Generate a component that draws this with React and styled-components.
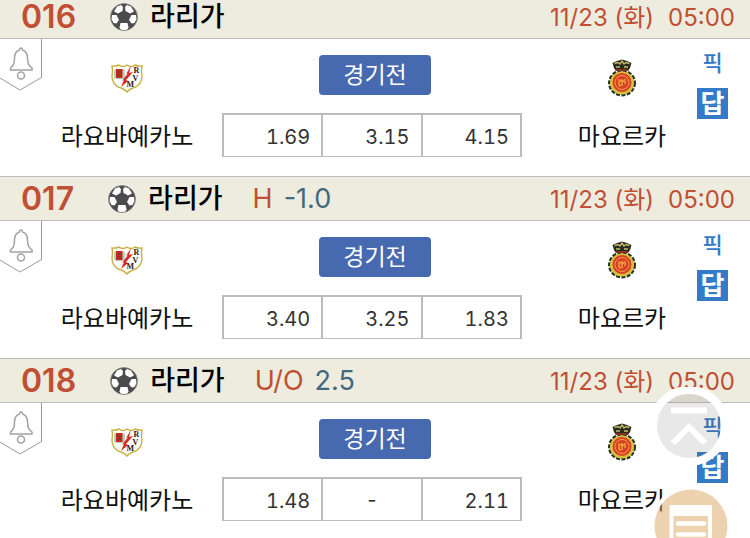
// src/App.jsx

import React from 'react';
import styled, { createGlobalStyle } from 'styled-components';

const GlobalStyle = createGlobalStyle`
  * {
    box-sizing: border-box;
  }

  html {
    overflow: hidden;
  }

  body {
    margin: 0;
    background: #fff;
    color: #1c1c1c;
    font-family: Inter, 'Noto Sans CJK KR', sans-serif;
  }

  button {
    border: none;
    padding: 0;
    font-family: inherit;
    cursor: pointer;
  }
`;

const GameList = styled.main`
  margin-top: -6px;
`;

const Game = styled.article`
  height: 182px;
`;

const GameHeader = styled.header`
  display: flex;
  align-items: center;
  height: 45px;
  padding: 0 15px 0 21px;
  border-top: 1px solid #bcbcbc;
  border-bottom: 1px solid #bcbcbc;
  background: #eeecdf;
  white-space: nowrap;
`;

const GameNumber = styled.span`
  margin-right: 34px;
  color: #c04f33;
  font-size: 32px;
  font-weight: 600;
  line-height: 28px;
`;

const League = styled.h2`
  margin: 0 30px 0 12px;
  padding-bottom: 4px;
  color: #000;
  font-size: 27px;
  font-weight: 500;
`;

const BetType = styled.span`
  margin-right: 11px;
  color: #c04f33;
  font-size: 27px;
`;

const BetLine = styled.span`
  color: #416a80;
  font-size: 27px;
`;

const Kickoff = styled.time`
  display: flex;
  align-items: baseline;
  gap: 14px;
  margin-left: auto;
  padding-bottom: 2px;
  color: #c04f33;
  font-size: 24px;
`;

const GameBody = styled.div`
  position: relative;
  display: grid;
  grid-template-columns: 222fr 306fr 162fr 60fr;
  height: 137px;
`;

const AlarmButton = styled.button`
  position: absolute;
  top: 0;
  left: 0;
  width: 42px;
  height: 53px;
  background: none;

  svg {
    display: block;
  }
`;

const Team = styled.section`
  display: flex;
  flex-direction: column;
  align-items: center;
  padding-top: 18px;
  padding-left: ${(props) => (props.$home ? '32px' : '26px')};
`;

const TeamName = styled.h3`
  margin: 20px 0 0;
  font-size: 24px;
  font-weight: 400;
  line-height: 40px;
  color: #111;
  white-space: nowrap;
`;

const Center = styled.section`
  display: flex;
  flex-direction: column;
  align-items: center;
  padding-top: 16px;
`;

const StatusButton = styled.button`
  width: 112px;
  height: 40px;
  border-radius: 4px;
  background: #4769b0;
  color: #fff;
  font-size: 23px;
  line-height: 40px;
`;

const Odds = styled.table`
  align-self: flex-start;
  width: 98%;
  height: 44px;
  margin-top: 18px;
  border-collapse: collapse;
  table-layout: fixed;
`;

const OddsCell = styled.td`
  padding: ${(props) => (props.$empty ? '0' : '2px 11px 0 0')};
  border: 2px solid #bcbcbc;
  border-bottom-width: 1px;
  color: #333;
  font-size: 20px;
  font-variant-numeric: tabular-nums;
  text-align: ${(props) => (props.$empty ? 'center' : 'right')};
`;

const Links = styled.nav`
  display: flex;
  flex-direction: column;
  align-items: center;
  gap: 9px;
  padding: 9px 15px 0 0;
`;

const PickLink = styled.a`
  color: #347ac6;
  font-size: 22px;
  font-weight: 500;
  line-height: 31px;
  text-decoration: none;
`;

const AnswerLink = styled.a`
  width: 31px;
  background: #347ac6;
  color: #fff;
  font-size: 26px;
  font-weight: 700;
  line-height: 31px;
  text-align: center;
  text-decoration: none;
`;

const FloatingButtons = styled.aside`
  position: fixed;
  right: 18px;
  bottom: -29px;
  display: flex;
  flex-direction: column;
  align-items: flex-start;
  gap: 20px;
`;

const RoundButton = styled.button`
  border-radius: 50%;
  background: none;

  svg {
    display: block;
  }
`;

const Ball = () => (
  <svg width="28" height="28" viewBox="0 0 28 28" aria-hidden="true">
    <circle cx="14" cy="14" r="13.5" fill="#4b4b4d" />
    <g fill="#fff">
      <path d="M7 3.500 11 2 13 4 12.500 8 8 10.500 4 8.500Z" />
      <path d="M21 3.500 17 2 15 4 15.500 8 20 10.500 24 8.500Z" />
      <path d="M2 12 6.500 12 9 17 6.500 20.500 3.500 20 1.500 16Z" />
      <path d="M26 12 21.500 12 19 17 21.500 20.500 24.500 20 26.500 16Z" />
      <path d="M10.500 20H17.500L18.500 24.500 17 27H11L9.500 24.500Z" />
    </g>
    <circle cx="14" cy="14" r="13.500" fill="none" stroke="#8a8a88" strokeWidth="0.8" />
  </svg>
);

const Bell = () => (
  <svg width="42" height="53" viewBox="0 0 42 53" fill="none" aria-hidden="true">
    <path d="M0 39 20 51 41.500 38.500V0" stroke="#999" />
    <g stroke="#a3a3a3" strokeWidth="1.500">
      <path d="M21 9C20 9 19.500 10 19.500 11 16 12 14.500 15 14.500 19 14.500 25 13.500 26.500 10.500 29V31H32V29C29 26.500 27.500 25 27.500 19 27.500 15 26 12 22.500 11 22.500 10 22 9 21 9Z" />
      <circle cx="21" cy="36.500" r="3.500" />
    </g>
  </svg>
);

const RayoCrest = () => (
  <svg width="40" height="40" viewBox="0 0 40 40" aria-hidden="true">
    <path d="M5 9Q9 9.500 12 8 16 11 20 8 24 11 28 8 31 9.500 35 9 34 13 35 19 35 26 29 30 23 31.500 20 35 17 31.500 11 30 5 26 5 19 6 13 5 9Z" fill="#fffefa" stroke="#c9b043" strokeWidth="1.400" />
    <rect x="7" y="12" width="11" height="10" rx="2" fill="#b4d3c0" />
    <rect x="9" y="12" width="6.500" height="9" fill="#c92a20" />
    <path d="M10 15H14.500M10 18H14.500" stroke="#6b3c22" />
    <path d="M24 9 22 16 26 15 19 23 21 24 14 30 17 23 15 24 21 16 19 17Z" fill="#d82a25" />
    <g fill="#222" fontFamily="Liberation Serif, serif" fontSize="8" fontWeight="700">
      <text x="26.500" y="16">R</text>
      <text x="25.500" y="23.500">V</text>
      <text x="19.500" y="30">M</text>
    </g>
  </svg>
);

const MallorcaCrest = () => (
  <svg width="40" height="40" viewBox="0 0 40 40" aria-hidden="true">
    <ellipse cx="20" cy="26" rx="12.500" ry="12" fill="#d0c541" />
    <ellipse cx="20" cy="26" rx="13" ry="12.500" fill="none" stroke="#27331f" strokeWidth="2" strokeDasharray="4 1.500" />
    <path d="M12 11 10.500 6 15 4 20 2.500 25 4 29.500 6 28 11 26 14H14Z" fill="#292c1c" />
    <path d="M12.500 6.500 16 5.500 18 7 20 4 22 7 24 5.500 27.500 6.500M14 10H18M22 10H26" fill="none" stroke="#c5ba70" strokeWidth="1.400" />
    <path d="M14 13H26" stroke="#a83325" strokeWidth="1.500" />
    <circle cx="20" cy="25.500" r="10" fill="#d8402a" />
    <circle cx="20" cy="25.500" r="10" fill="none" stroke="#e5bd3c" />
    <circle cx="20" cy="25.500" r="7" fill="none" stroke="#efa33b" />
    <path d="M17 22V27Q17 29 19 29M20 22V29M23 22V27M18 24H22" fill="none" stroke="#f0aa3d" strokeWidth="1.300" />
  </svg>
);

const TopIcon = () => (
  <svg width="78" height="78" viewBox="0 0 78 78" aria-hidden="true">
    <circle cx="39" cy="39" r="32.500" fill="#646464" fillOpacity="0.15" />
    <circle cx="39" cy="39" r="36" fill="none" stroke="#fff" strokeWidth="8" />
    <path d="M21 23.500H57M23 56 39 40 55 56" fill="none" stroke="#fff" strokeWidth="6" />
  </svg>
);

const SlipIcon = () => (
  <svg width="82" height="82" viewBox="0 0 82 82" aria-hidden="true">
    <circle cx="41" cy="41" r="38.500" fill="none" stroke="#fff" strokeWidth="4" />
    <circle cx="41" cy="41" r="36.500" fill="#dba561" fillOpacity="0.5" />
    <rect x="19.500" y="20" width="42.500" height="46" fill="#fff" />
    <rect x="23.500" y="31" width="34.500" height="32" fill="#edd2b0" />
    <path d="M28 38.500H54M28 49.500H54M28 59.500H54" stroke="#fff" strokeWidth="4.500" strokeLinecap="round" />
  </svg>
);

const games = [
  { id: '016', odds: ['1.69', '3.15', '4.15'] },
  { id: '017', type: 'H', line: '-1.0', odds: ['3.40', '3.25', '1.83'] },
  { id: '018', type: 'U/O', line: '2.5', odds: ['1.48', '-', '2.11'] },
];

const GameItem = ({ game }) => (
  <Game>
    <GameHeader>
      <GameNumber>{game.id}</GameNumber>
      <Ball />
      <League>라리가</League>
      {game.type && <BetType>{game.type}</BetType>}
      {game.line && <BetLine>{game.line}</BetLine>}
      <Kickoff>
        <span>11/23 (화)</span>
        <span>05:00</span>
      </Kickoff>
    </GameHeader>
    <GameBody>
      <AlarmButton aria-label="알림">
        <Bell />
      </AlarmButton>
      <Team $home>
        <RayoCrest />
        <TeamName>라요바예카노</TeamName>
      </Team>
      <Center>
        <StatusButton>경기전</StatusButton>
        <Odds>
          <tbody>
            <tr>
              {game.odds.map((odd, i) => (
                <OddsCell key={i} $empty={odd === '-'}>{odd}</OddsCell>
              ))}
            </tr>
          </tbody>
        </Odds>
      </Center>
      <Team>
        <MallorcaCrest />
        <TeamName>마요르카</TeamName>
      </Team>
      <Links>
        <PickLink href="#pick">픽</PickLink>
        <AnswerLink href="#answer">답</AnswerLink>
      </Links>
    </GameBody>
  </Game>
);

const App = () => (
  <>
    <GlobalStyle />
    <GameList>
      {games.map((game) => (
        <GameItem key={game.id} game={game} />
      ))}
    </GameList>
    <FloatingButtons>
      <RoundButton aria-label="맨 위로">
        <TopIcon />
      </RoundButton>
      <RoundButton aria-label="구매표">
        <SlipIcon />
      </RoundButton>
    </FloatingButtons>
  </>
);

export default App;
